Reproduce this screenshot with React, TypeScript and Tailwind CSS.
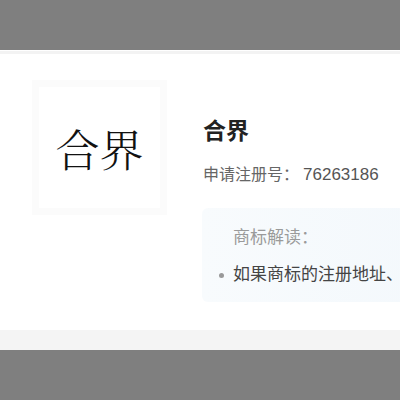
import React from 'react';

const cjk = "font-['Liberation_Sans','Noto_Sans_CJK_SC',sans-serif]";

export default function App() {
  return (
    <div className={`w-[400px] h-[400px] flex flex-col overflow-hidden ${cjk}`}>
      <div className="h-[50px] bg-[#7f7f7f]" />
      <div className="h-px bg-white" />
      <div className="h-[3px] bg-[#f3f3f3]" />

      {/* card */}
      <div className="h-[276px] bg-white flex pl-[32px] pt-[26px] overflow-hidden">
        <div className="w-[135px] h-[135px] shrink-0 bg-[#fbfbfb] p-[7px]">
          <div className="w-full h-full bg-white flex items-center justify-center">
            <span className="text-[44px] leading-none font-light text-[#111] font-['Noto_Serif_CJK_SC','Noto_Sans_CJK_SC',serif]">
              合界
            </span>
          </div>
        </div>

        <div className="ml-[35px] mt-[36px] flex flex-col min-w-[240px]">
          <div className="pl-px text-[23px] leading-[30px] font-bold text-[#222]">合界</div>
          <div className="pl-px mt-[17px] text-[16px] leading-[24px] text-[#666] whitespace-nowrap">
            申请注册号：<span className="ml-[4px] text-[17px] text-[#555]">76263186</span>
          </div>
          <div className="mt-[21px] w-[260px] h-[94px] rounded-l-[6px] bg-gradient-to-r from-[#f8fbfd] to-[#f3f8fc] pl-[31px] pt-[17px]">
            <div className="text-[17px] leading-[26px] text-[#9a9a9a]">商标解读：</div>
            <div className="mt-[11px] relative text-[17px] leading-[26px] text-[#444] whitespace-nowrap">
              <span className="absolute left-[-14px] top-[11px] w-[5px] h-[5px] rounded-full bg-[#999]" />
              如果商标的注册地址、
            </div>
          </div>
        </div>
      </div>

      <div className="h-[20px] bg-[#f4f4f4]" />
      <div className="flex-1 bg-[#7f7f7f]" />
    </div>
  );
}
